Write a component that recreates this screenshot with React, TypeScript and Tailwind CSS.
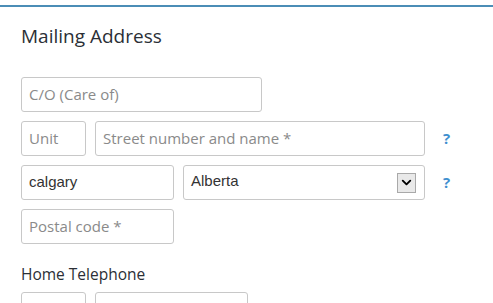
import { ChevronDown } from "lucide-react";

const field =
  "h-[35px] rounded-[3px] border border-[#c8c8c8] bg-white px-[7px] pb-[2px] text-[15px] text-[#333] placeholder:text-[#8a8a8a] outline-none";

function Help() {
  return <span className="ml-[9px] w-[10px] text-[15px] font-bold text-[#3f8fcf]">?</span>;
}

export default function App() {
  return (
    <div className="h-[303px] w-[493px] overflow-hidden bg-white font-['Open_Sans',sans-serif]">
      <div className="mt-[5px] h-[2px] w-full bg-[#4b8db6]" />
      <div className="pl-[21px]">
        <h2 className="mt-[17px] text-[19px] leading-[24px] text-[#2b2f36]">Mailing Address</h2>

        <div className="mt-[29px] flex flex-col gap-[9px]">
          <input className={`${field} w-[241px]`} placeholder="C/O (Care of)" />

          <div className="flex items-center gap-[9px]">
            <input className={`${field} w-[65px]`} placeholder="Unit" />
            <input className={`${field} w-[330px]`} placeholder="Street number and name *" />
            <Help />
          </div>

          <div className="flex items-center gap-[9px]">
            <input
              className={`${field} w-[153px] font-['Liberation_Sans',sans-serif]`}
              defaultValue="calgary"
            />
            <div className={`${field} flex w-[242px] items-center justify-between pr-[8px] font-['Liberation_Sans',sans-serif]`}>
              <span>Alberta</span>
              <span className="mt-[2px] flex h-[20px] w-[19px] items-center justify-center border border-[#a9a9a9] bg-[#e9e9e9]">
                <ChevronDown className="h-[15px] w-[15px] text-black" strokeWidth={3} />
              </span>
            </div>
            <Help />
          </div>

          <input className={`${field} w-[153px]`} placeholder="Postal code *" />
        </div>

        <h3 className="mt-[20px] text-[15.5px] leading-[20px] text-[#2b2f36]">Home Telephone</h3>

        <div className="mt-[8px] flex gap-[9px]">
          <div className={`${field} w-[65px]`} />
          <div className={`${field} w-[153px]`} />
        </div>
      </div>
    </div>
  );
}
